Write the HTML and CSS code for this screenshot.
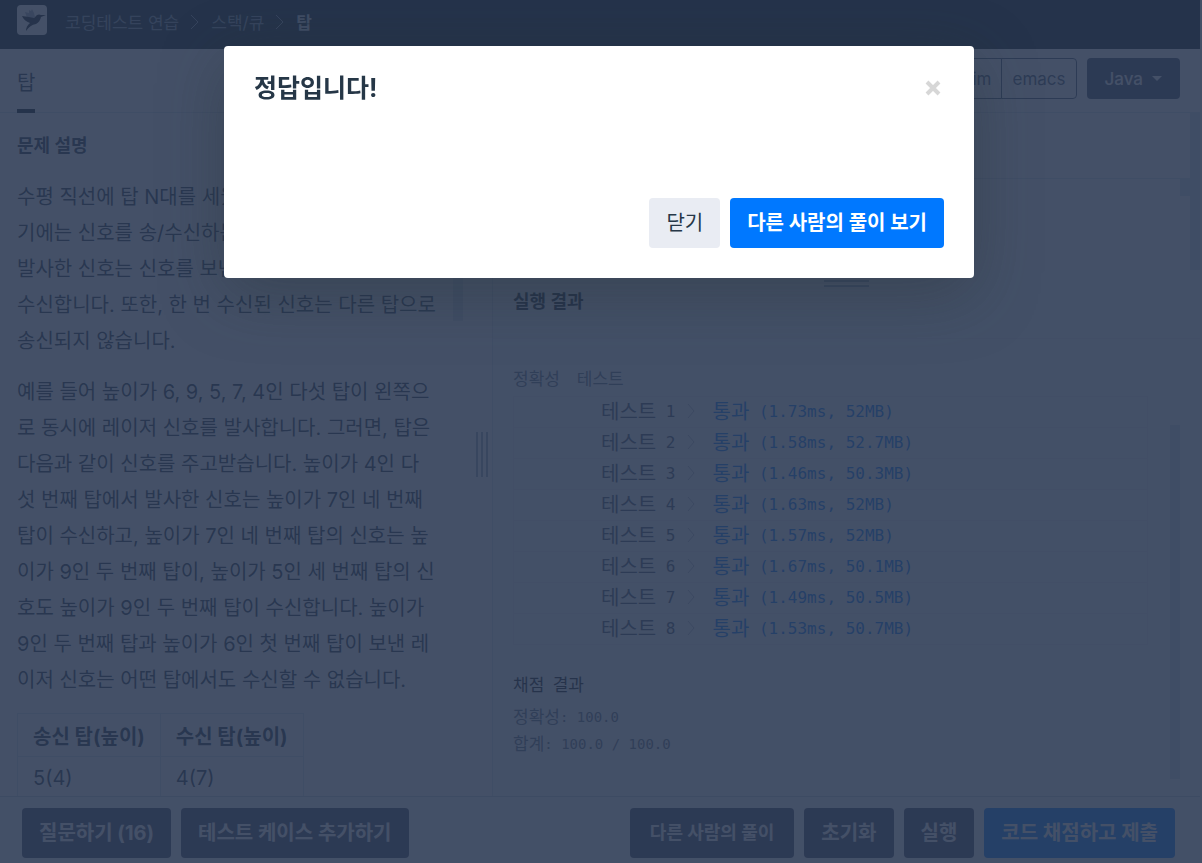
FILE: index.html
```html
<!DOCTYPE html>
<html lang="ko">
<head>
  <meta charset="UTF-8">
  <title>코딩테스트 연습 - 탑</title>
  <meta name="viewport" content="width=device-width, initial-scale=1.0">
  <link rel="stylesheet" href="styles.css">
</head>
<body>

  <div class="page">
    <header class="navbar">
      <a href="#" class="logo" aria-label="홈">
        <svg width="30" height="30" viewBox="0 0 30 30">
          <rect width="30" height="30" rx="4" fill="#fff"/>
          <path d="M8 7 L12 8 L12 5 L14 6 L15 4 L17 8 L18 12 L15 14 L10 13 Z" fill="#a3adb8"/>
          <path d="M5 11 L12 12 L17 13 L20 10 Q22 9 24 10 L29 10 L24 12 Q23 17 19 19 Q13 20 9 26 Q9 21 13 18 Q7 16 5 11 Z" fill="#0c151c"/>
        </svg>
      </a>
      <nav class="breadcrumb">
        <a href="#">코딩테스트 연습</a>
        <svg class="arrow" width="10" height="18" viewBox="0 0 10 18"><path d="M1 2 L8 9 L1 16"/></svg>
        <a href="#">스택/큐</a>
        <svg class="arrow" width="10" height="18" viewBox="0 0 10 18"><path d="M1 2 L8 9 L1 16"/></svg>
        <a href="#" class="active">탑</a>
      </nav>
    </header>

    <div class="toolbar">
      <a href="#" class="tab">탑</a>
      <div class="editor-options">
        <div class="btn-group">
          <button type="button">vim</button>
          <button type="button">emacs</button>
        </div>
        <button type="button" class="btn-lang">Java<span class="caret"></span></button>
      </div>
    </div>

    <main class="main">
      <section class="description">
        <div class="guide">
          <h6>문제 설명</h6>
          <p>수평 직선에 탑 N대를 세웠습니다. 모든 탑의 꼭대기에는 신호를 송/수신하는 장치를 설치했습니다. 발사한 신호는 신호를 보낸 탑보다 높은 탑에서만 수신합니다. 또한, 한 번 수신된 신호는 다른 탑으로 송신되지 않습니다.</p>
          <p>예를 들어 높이가 6, 9, 5, 7, 4인 다섯 탑이 왼쪽으로 동시에 레이저 신호를 발사합니다. 그러면, 탑은 다음과 같이 신호를 주고받습니다. 높이가 4인 다섯 번째 탑에서 발사한 신호는 높이가 7인 네 번째 탑이 수신하고, 높이가 7인 네 번째 탑의 신호는 높이가 9인 두 번째 탑이, 높이가 5인 세 번째 탑의 신호도 높이가 9인 두 번째 탑이 수신합니다. 높이가 9인 두 번째 탑과 높이가 6인 첫 번째 탑이 보낸 레이저 신호는 어떤 탑에서도 수신할 수 없습니다.</p>
          <table class="guide-table">
            <thead>
              <tr><th>송신 탑(높이)</th><th>수신 탑(높이)</th></tr>
            </thead>
            <tbody>
              <tr><td>5(4)</td><td>4(7)</td></tr>
            </tbody>
          </table>
        </div>
        <div class="track"><div class="guide-thumb"></div></div>
        <div class="gutter"><i></i><i></i><i></i></div>
      </section>

      <section class="run">
        <div class="code">
          <div class="code-tab"></div>
          <div class="code-body"><div class="code-thumb"></div></div>
          <div class="code-track"></div>
        </div>
        <div class="gutter-row"><i></i><i></i></div>
        <h6 class="output-title">실행 결과</h6>
        <div class="output">
          <div class="console">
            <p class="console-text"><span>정확성</span>&nbsp; <span>테스트</span></p>
            <table class="console-table">
              <tbody>
                <tr><th><span>테스트</span> 1<svg class="arrow" width="10" height="18" viewBox="0 0 10 18"><path d="M1 2 L7 9 L1 16"/></svg></th><td><span>통과</span> (1.73ms, 52MB)</td></tr>
                <tr><th><span>테스트</span> 2<svg class="arrow" width="10" height="18" viewBox="0 0 10 18"><path d="M1 2 L7 9 L1 16"/></svg></th><td><span>통과</span> (1.58ms, 52.7MB)</td></tr>
                <tr><th><span>테스트</span> 3<svg class="arrow" width="10" height="18" viewBox="0 0 10 18"><path d="M1 2 L7 9 L1 16"/></svg></th><td><span>통과</span> (1.46ms, 50.3MB)</td></tr>
                <tr><th><span>테스트</span> 4<svg class="arrow" width="10" height="18" viewBox="0 0 10 18"><path d="M1 2 L7 9 L1 16"/></svg></th><td><span>통과</span> (1.63ms, 52MB)</td></tr>
                <tr><th><span>테스트</span> 5<svg class="arrow" width="10" height="18" viewBox="0 0 10 18"><path d="M1 2 L7 9 L1 16"/></svg></th><td><span>통과</span> (1.57ms, 52MB)</td></tr>
                <tr><th><span>테스트</span> 6<svg class="arrow" width="10" height="18" viewBox="0 0 10 18"><path d="M1 2 L7 9 L1 16"/></svg></th><td><span>통과</span> (1.67ms, 50.1MB)</td></tr>
                <tr><th><span>테스트</span> 7<svg class="arrow" width="10" height="18" viewBox="0 0 10 18"><path d="M1 2 L7 9 L1 16"/></svg></th><td><span>통과</span> (1.49ms, 50.5MB)</td></tr>
                <tr><th><span>테스트</span> 8<svg class="arrow" width="10" height="18" viewBox="0 0 10 18"><path d="M1 2 L7 9 L1 16"/></svg></th><td><span>통과</span> (1.53ms, 50.7MB)</td></tr>
              </tbody>
            </table>
            <p class="console-heading"><span>채점</span> <span>결과</span></p>
            <p class="console-text"><span>정확성</span>: 100.0</p>
            <p class="console-text"><span>합계</span>: 100.0 / 100.0</p>
          </div>
          <div class="output-thumb"></div>
        </div>
      </section>
    </main>

    <footer class="footer">
      <button type="button" class="btn btn-dark">질문하기 (16)</button>
      <button type="button" class="btn btn-dark">테스트 케이스 추가하기</button>
      <div class="footer-right">
        <a href="#" class="btn btn-dark btn-link">다른 사람의 풀이</a>
        <button type="button" class="btn btn-dark">초기화</button>
        <button type="button" class="btn btn-dark">실행</button>
        <button type="button" class="btn btn-primary">코드 채점하고 제출</button>
      </div>
    </footer>
  </div>

  <div class="backdrop">
    <div class="modal" role="dialog" aria-labelledby="modal-title">
      <div class="modal-header">
        <h4 id="modal-title">정답입니다!</h4>
        <button type="button" class="close" aria-label="닫기">
          <svg width="16" height="16" viewBox="0 0 16 16"><path d="M2 2 L14 14 M14 2 L2 14"/></svg>
        </button>
      </div>
      <div class="modal-footer">
        <button type="button" class="btn btn-light">닫기</button>
        <a href="#" class="btn btn-primary">다른 사람의 풀이 보기</a>
      </div>
    </div>
  </div>

</body>
</html>
```
FILE: styles.css
```css
* {
  box-sizing: border-box;
}

body {
  margin: 0;
  font-family: Inter, "Noto Sans CJK KR", sans-serif;
  font-size: 20px;
  color: #263747;
  background-color: #fff;
}

h4, h6, p {
  margin: 0;
}

a {
  color: inherit;
  text-decoration: none;
}

button {
  font-family: inherit;
  cursor: pointer;
}

.page {
  display: flex;
  flex-direction: column;
  height: 100vh;
  padding-right: 2px;
  overflow: hidden;
}

/* top bar */
.navbar {
  display: flex;
  align-items: flex-start;
  flex: none;
  height: 49px;
  padding: 5px 17px;
  background-color: #001618;
}

.logo {
  display: block;
  height: 30px;
}

.breadcrumb {
  display: flex;
  align-items: center;
  gap: 11px;
  height: 33px;
  margin-left: 18px;
  font-size: 17px;
  color: #8597a5;
}

.breadcrumb .active {
  font-weight: 700;
  color: #d0d8de;
}

.arrow {
  fill: none;
  stroke: #8597a5;
  stroke-width: 1;
}

.toolbar {
  display: flex;
  justify-content: space-between;
  flex: none;
  height: 64px;
  padding: 9px 20px 0 17px;
  border-bottom: 1px solid #d7e2eb;
}

.tab {
  height: 55px;
  line-height: 50px;
  border-bottom: 4px solid #001618;
}

.editor-options {
  display: flex;
  gap: 10px;
  height: 41px;
}

.btn-group {
  display: flex;
}

.btn-group button {
  padding: 0 10px;
  border: 1px solid #44576c;
  background: none;
  color: #44576c;
  font-size: 17px;
}

.btn-group button:first-child {
  border-radius: 4px 0 0 4px;
}

.btn-group button:last-child {
  margin-left: -1px;
  border-radius: 0 4px 4px 0;
}

.btn-lang {
  display: flex;
  align-items: center;
  gap: 9px;
  padding: 0 18px;
  border: 0;
  border-radius: 4px;
  background-color: #3f4862;
  color: #fff;
  font-size: 17px;
  font-weight: 500;
}

.caret {
  border: 5px solid transparent;
  border-top-color: #fff;
  border-bottom: 0;
}

/* two panes */
.main {
  display: flex;
  flex: 1;
  min-height: 0;
}

.description {
  display: flex;
  flex: 0 0 41%;
  overflow: hidden;
}

.guide {
  flex: 1;
  padding: 20px 17px 0;
  overflow: hidden;
}

h6 {
  font-size: 18px;
  line-height: 26px;
  font-weight: 700;
}

.guide p {
  margin-bottom: 15px;
  line-height: 36px;
}

.guide h6 {
  margin-bottom: 20px;
}

.guide-table {
  border-collapse: collapse;
}

.guide-table th,
.guide-table td {
  height: 43px;
  padding: 0 15px;
  border: 1px solid #d7e2eb;
  text-align: left;
}

.track {
  width: 10px;
}

.guide-thumb {
  height: 208px;
  background-color: #d7e2eb;
}

.gutter {
  display: flex;
  align-items: center;
  justify-content: center;
  gap: 3px;
  width: 29px;
  padding-left: 8px;
}

.gutter i {
  width: 2px;
  height: 45px;
  background-color: #98a8b9;
}

.run {
  display: flex;
  flex-direction: column;
  flex: 1;
  min-width: 0;
  border-left: 1px solid #d7e2eb;
  background-color: #f7f9fb;
}

.code {
  display: grid;
  grid-template: 66px 1fr / 1fr 10px;
  height: 157px;
  background-color: #fff;
}

.code-tab {
  border-bottom: 1px solid #d7e2eb;
}

.code-body {
  grid-row: 2;
}

.code-thumb {
  width: 10px;
  height: 17px;
  margin-left: auto;
  background-color: #d7e2eb;
}

.code-track {
  grid-area: 1 / 2 / 3 / 3;
  background-color: #d7e2eb;
}

.gutter-row {
  display: flex;
  flex-direction: column;
  align-items: center;
  gap: 3px;
  padding-top: 10px;
}

.gutter-row i {
  width: 45px;
  height: 2px;
  background-color: #98a8b9;
}

.output-title {
  height: 52px;
  padding: 2px 20px;
  border-bottom: 1px solid #e9ecf3;
  color: #0c151c;
}

.output {
  display: flex;
  flex: 1;
  justify-content: space-between;
  margin-bottom: 17px;
  padding-right: 20px;
}

.output-thumb {
  align-self: flex-end;
  width: 10px;
  height: 354px;
  background-color: #d7e2eb;
}

/* console result */
.console {
  flex: 1;
  padding: 27px 22px 0 20px;
  font-family: "DejaVu Sans Mono", "Noto Sans CJK KR", monospace;
}

.console-text,
.console-heading {
  font-size: 14px;
  line-height: 27px;
}

.console-text {
  color: #5f7183;
}

.console-text span,
.console-heading span {
  font-size: 17px;
  vertical-align: -1px;
}

.console-heading {
  margin: 27px 0 5px;
  color: #0c151c;
}

.console-table {
  width: 100%;
  margin-top: 3px;
  border-collapse: collapse;
  font-size: 16px;
}

.console-table tr {
  height: 31px;
  border: 1px solid #e9ecf3;
}

.console-table span {
  font-size: 20px;
  vertical-align: -2px;
}

.console-table th {
  width: 187px;
  padding: 0;
  color: #44576c;
  font-weight: 400;
  line-height: 24px;
  text-align: right;
}

.console-table .arrow {
  margin: 0 4px 0 11px;
  stroke: #b2c0cc;
  vertical-align: -3px;
}

.console-table td {
  padding: 0 12px;
  color: #0078ff;
  line-height: 24px;
}

/* bottom bar */
.footer {
  display: flex;
  flex: none;
  gap: 10px;
  padding: 11px 25px 5px 22px;
  border-top: 1px solid #c5d0da;
  background-color: #f7f9fb;
}

.footer-right {
  display: flex;
  gap: 10px;
  margin-left: auto;
}

.btn {
  height: 50px;
  padding: 0 17px;
  border: 0;
  border-radius: 4px;
  font-size: 20px;
  font-weight: 700;
  line-height: 50px;
  white-space: nowrap;
}

.btn-dark {
  background-color: #3f4862;
  color: #fff;
}

.btn-link {
  padding: 0 20px;
  font-size: 18px;
}

.btn-primary {
  background-color: #0078ff;
  color: #fff;
}

.btn-light {
  background-color: #e9ecf3;
  color: #263747;
  font-weight: 400;
}

/* modal */
.backdrop {
  position: fixed;
  inset: 0;
  padding: 46px 4px 0 0;
  background-color: rgba(42, 56, 82, 0.88);
}

.modal {
  display: flex;
  flex-direction: column;
  max-width: 750px;
  min-height: 232px;
  margin: 0 auto;
  padding: 24px 30px 30px;
  border-radius: 4px;
  background-color: #fff;
  box-shadow: 0 16px 64px rgba(38, 50, 56, 0.4);
}

.modal-header {
  display: flex;
  align-items: center;
  justify-content: space-between;
}

.modal-header h4 {
  font-size: 25px;
  line-height: 36px;
  font-weight: 700;
}

.close {
  display: flex;
  padding: 3px;
  border: 0;
  background: none;
}

.close svg {
  stroke: #d7d7d7;
  stroke-width: 4;
}

.modal-footer {
  display: flex;
  justify-content: flex-end;
  gap: 10px;
  margin-top: auto;
}
```
